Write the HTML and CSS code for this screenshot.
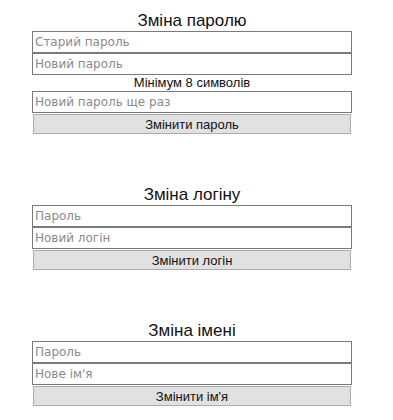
FILE: index.html
```html
<!DOCTYPE html>
<html lang="uk">
<head>
  <meta charset="UTF-8" />
  <meta name="viewport" content="width=device-width, initial-scale=1" />
  <title>Налаштування</title>
  <link rel="stylesheet" href="styles.css">
</head>
<body>

<div class="settings">
  <form class="settings-form">
    <h3>Зміна паролю</h3>
    <input type="password" placeholder="Старий пароль" />
    <input type="password" placeholder="Новий пароль" />
    <p class="hint">Мінімум 8 символів</p>
    <input type="password" placeholder="Новий пароль ще раз" />
    <button type="button">Змінити пароль</button>
  </form>

  <form class="settings-form">
    <h3>Зміна логіну</h3>
    <input type="password" placeholder="Пароль" />
    <input type="text" placeholder="Новий логін" />
    <button type="button">Змінити логін</button>
  </form>

  <form class="settings-form">
    <h3>Зміна імені</h3>
    <input type="password" placeholder="Пароль" />
    <input type="text" placeholder="Нове ім'я" />
    <button type="button">Змінити ім'я</button>
  </form>
</div>

</body>
</html>
```

FILE: styles.css
```css
* {
  margin: 0;
  padding: 0;
  box-sizing: border-box;
}

body {
  font-family: 'Liberation Sans', Arial, sans-serif;
  color: #111;
  background: white;
}

.settings {
  width: 320px;
  margin-left: 32px;
  padding-top: 11px;
}

.settings-form {
  display: flex;
  flex-direction: column;
}

.settings-form + .settings-form {
  margin-top: 50px;
}

.settings-form h3 {
  font-size: 17px;
  font-weight: normal;
  line-height: 20px;
  text-align: center;
}

.settings-form input {
  display: block;
  width: 320px;
  height: 22px;
  border: 1px solid #7a7a7a;
  padding: 0 2px;
  font-family: 'DejaVu Sans', Verdana, sans-serif;
  font-size: 12px;
  color: #333;
  outline: none;
}

.settings-form input::placeholder {
  color: #8a8a8a;
}

.hint {
  font-size: 13px;
  line-height: 16px;
  text-align: center;
}

.settings-form button {
  width: 318px;
  height: 20px;
  margin: 1px;
  border: 1px solid #adadad;
  background: #e1e1e1;
  font-family: 'Liberation Sans', Arial, sans-serif;
  font-size: 13px;
  color: #111;
  cursor: pointer;
}
```
